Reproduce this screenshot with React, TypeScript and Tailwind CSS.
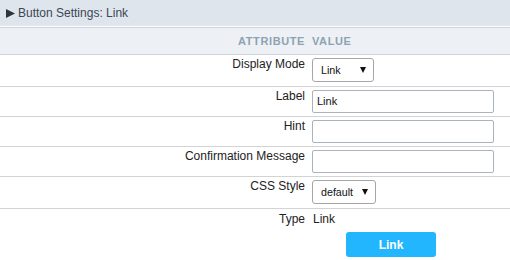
import React from "react";

function Caret() {
  return (
    <svg width="6" height="6" viewBox="0 0 6 6" className="shrink-0">
      <polygon points="0,0 6,0 3,6" fill="#111" />
    </svg>
  );
}

function FakeSelect({ value, width }: { value: string; width: string }) {
  return (
    <div
      className={`${width} h-[24px] border border-[#a6a6a6] rounded-[3px] bg-white flex items-center justify-between pl-[8px] pr-[7px] text-[10.7px] text-[#111]`}
    >
      <span>{value}</span>
      <Caret />
    </div>
  );
}

function FakeInput({ value }: { value?: string }) {
  return (
    <div className="w-[182px] h-[23px] border border-[#aab2bc] rounded-[2px] bg-white flex items-center pl-[4px] text-[11px] text-[#111]">
      {value}
    </div>
  );
}

function Row({
  label,
  children,
}: {
  label: string;
  children: React.ReactNode;
}) {
  return (
    <div className="flex border-b border-[#d3d3d3]">
      <div className="w-[305px] text-right pt-[2px] leading-[15px] text-[#222]">{label}</div>
      <div className="pl-[7px] py-[3px]">{children}</div>
    </div>
  );
}

export default function App() {
  return (
    <div className="w-[510px] h-[260px] bg-white font-['Liberation_Sans',Arial,sans-serif] text-[12px] overflow-hidden">
      <div className="h-[27px] bg-[#dee5ed] border-b border-white flex items-center pl-[6px] gap-[3px] text-[#3d4653] leading-[15px]">
        <svg width="9" height="9" viewBox="0 0 9 9">
          <polygon points="0,0 9,4.5 0,9" fill="#2f3540" />
        </svg>
        <span>Button Settings: Link</span>
      </div>
      <div className="h-[28px] bg-[#edf1f5] border-y border-[#d0d4d8] flex items-center text-[11px] font-bold tracking-[0.6px] text-[#8fa2b1]">
        <div className="w-[305px] text-right">ATTRIBUTE</div>
        <div className="pl-[7px]">VALUE</div>
      </div>
      <Row label="Display Mode">
        <div className="pb-[1px]">
          <FakeSelect value="Link" width="w-[62px]" />
        </div>
      </Row>
      <Row label="Label">
        <FakeInput value="Link" />
      </Row>
      <Row label="Hint">
        <FakeInput />
      </Row>
      <Row label="Confirmation Message">
        <FakeInput />
      </Row>
      <Row label="CSS Style">
        <div className="pb-[1px]">
          <FakeSelect value="default" width="w-[64px]" />
        </div>
      </Row>
      <div className="flex pt-[3px] leading-[15px] text-[#222]">
        <div className="w-[305px] text-right">Type</div>
        <div className="pl-[8px]">Link</div>
      </div>
      <div className="pl-[346px] pt-[5px]">
        <button className="w-[90px] h-[25px] rounded-[3px] bg-[#21b6fd] text-white font-bold text-[12px]">
          Link
        </button>
      </div>
    </div>
  );
}
